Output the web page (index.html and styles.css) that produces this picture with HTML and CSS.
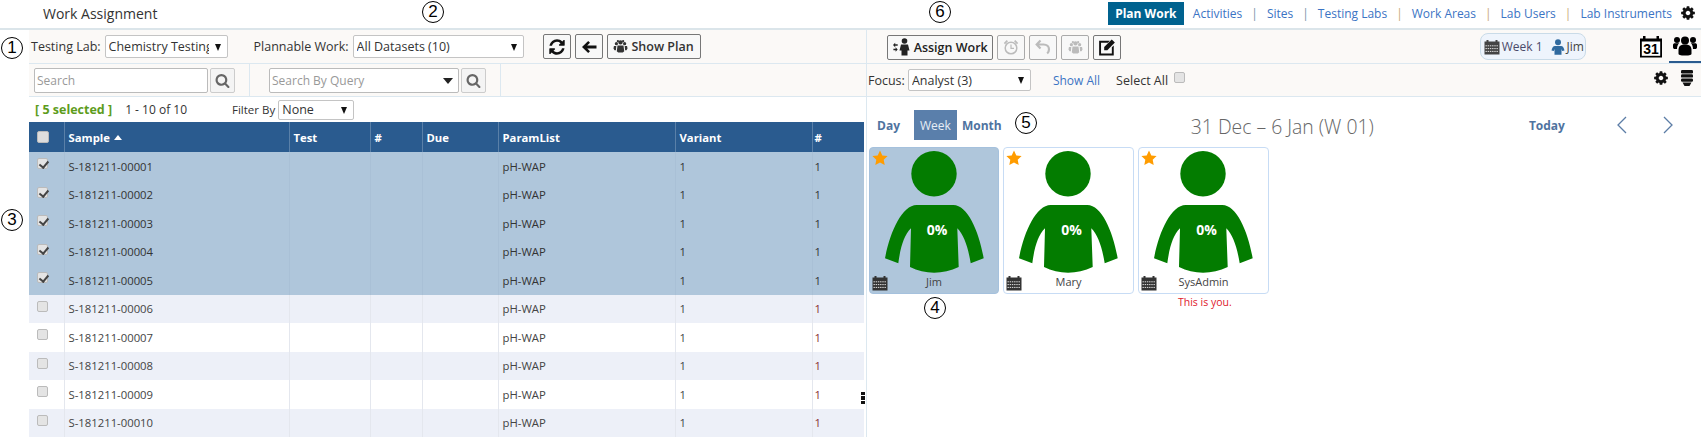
FILE: index.html
```html
<!DOCTYPE html>
<html lang="en">
<head>
<meta charset="utf-8">
<title>Work Assignment</title>
<link rel="stylesheet" href="styles.css">
</head>
<body>
<svg class="defs" aria-hidden="true">
  <symbol id="i-gear" viewBox="0 0 1792 1792"><path d="M1152 896q0-106-75-181t-181-75-181 75-75 181 75 181 181 75 181-75 75-181zm512-109v222q0 12-8 23t-20 13l-185 28q-19 54-39 91 35 50 107 138 10 12 10 25t-9 23q-27 37-99 108t-94 71q-12 0-26-9l-138-108q-44 23-91 38-16 136-29 186-7 28-36 28h-222q-14 0-24.5-8.5t-11.5-21.5l-28-184q-49-16-90-37l-141 107q-10 9-25 9-14 0-25-11-126-114-165-168-7-10-7-23 0-12 8-23 15-21 51-66.5t54-70.5q-27-50-41-99l-183-27q-13-2-21-12.5t-8-23.5v-222q0-12 8-23t19-13l186-28q14-46 39-92-40-57-107-138-10-12-10-24 0-10 9-23 26-36 98.5-107.5t94.5-71.5q13 0 26 10l138 107q44-23 91-38 16-136 29-186 7-28 36-28h222q14 0 24.5 8.5t11.5 21.5l28 184q49 16 90 37l142-107q9-9 24-9 13 0 25 10 129 119 165 170 7 8 7 22 0 12-8 23-15 21-51 66.5t-54 70.5q26 50 41 98l183 28q13 2 21 12.5t8 23.5z"/></symbol>
  <symbol id="i-search" viewBox="0 0 1792 1792"><path d="M1216 832q0-185-131.5-316.5t-316.5-131.5-316.5 131.5-131.5 316.5 131.5 316.5 316.5 131.5 316.5-131.5 131.5-316.5zm512 832q0 52-38 90t-90 38q-54 0-90-38l-343-342q-179 124-399 124-143 0-273.5-55.5t-225-150-150-225-55.5-273.5 55.5-273.5 150-225 225-150 273.5-55.5 273.5 55.5 225 150 150 225 55.5 273.5q0 220-124 399l343 343q37 37 37 90z"/></symbol>
  <symbol id="i-refresh" viewBox="0 0 1792 1792"><path d="M1639 1056q0 5-1 7-64 268-268 434.5t-478 166.5q-146 0-282.5-55t-243.5-157l-129 129q-19 19-45 19t-45-19-19-45v-448q0-26 19-45t45-19h448q26 0 45 19t19 45-19 45l-137 137q71 66 161 102t187 36q134 0 250-65t186-179q11-17 53-117 8-23 30-23h192q13 0 22.5 9.5t9.5 22.5zm25-800v448q0 26-19 45t-45 19h-448q-26 0-45-19t-19-45 19-45l138-138q-148-137-349-137-134 0-250 65t-186 179q-11 17-53 117-8 23-30 23h-199q-13 0-22.5-9.5t-9.5-22.5v-7q65-268 270-434.5t480-166.5q146 0 284 55.5t245 156.5l130-129q19-19 45-19t45 19 19 45z"/></symbol>
  <symbol id="i-back" viewBox="0 0 16 16"><path d="M7.2 2 1 8l6.200 6 1.800-1.700L6.200 9.400H15.500V6.600H6.200L9 3.700z"/></symbol>
  <symbol id="i-team" viewBox="0 0 16 16"><circle cx="8" cy="3.600" r="2.300"/><circle cx="3.600" cy="5" r="1.700"/><circle cx="12.400" cy="5" r="1.700"/><circle cx="5.200" cy="2.300" r="1.200"/><circle cx="10.800" cy="2.300" r="1.200"/><path d="M4.800 7h6.400l.8 6-1.600 1.500H5.600L4 13z"/><path d="M1 7.500h2.500l-.4 4.500H1.600L.5 10zM12.500 7.500H15l.5 2.500-1.100 2h-1.500z"/></symbol>
  <symbol id="i-assign" viewBox="0 0 18 18"><circle cx="11.500" cy="3" r="2.800"/><path d="M8 6.500h7l1.500 6h-2v5H8.500v-5h-2z"/><path d="M0 7 2.200 4.800v1.500h2.500v1.500H2.200v1.500zM4.700 11.500 2.600 13.700v-1.500H.4v-1.500h2.200V9.300z"/></symbol>
  <symbol id="i-clock" viewBox="0 0 16 16"><circle cx="8" cy="9" r="5.800" fill="none" stroke="currentColor" stroke-width="1.500"/><path d="M8 5.500V9.300H11" fill="none" stroke="currentColor" stroke-width="1.200"/><path d="M.8 4 3.700.9 5 2.200 2 5.200zM15.200 4 12.300.9 11 2.200 14 5.200z"/></symbol>
  <symbol id="i-undo" viewBox="0 0 16 16"><path d="M5.500 1.500 1.700 5.500 5.500 9.500M2 5.500h6.500c3.300 0 5.500 2.200 5.500 4.800 0 1.700-.7 3.200-1.800 4.200" fill="none" stroke="currentColor" stroke-width="2.200"/></symbol>
  <symbol id="i-edit" viewBox="0 0 16 16"><path d="M1 2.500h9.500L8.800 4.200H2.700v9.600h9.600V8.300L14 6.600V15.500H1z"/><path d="M5.500 8 12.200 1.300 15 4 8.300 10.800H5.500z"/></symbol>
  <symbol id="i-cal" viewBox="0 0 16 16"><path d="M.5 2.500h2V1h2v1.500h7V1h2v1.500h2v13H.5z"/><path d="M1.500 6.800H14.500M1.500 9.600H14.500M1.500 12.400H14.500" fill="none" stroke="#e2e2e2" stroke-width="1" stroke-dasharray="1.400 .8"/></symbol>
  <symbol id="i-person" viewBox="0 0 14 16"><circle cx="7" cy="3.200" r="3"/><path d="M4 7h6c1.900 0 3 2 3.500 4.500l-2.300.6L10.500 10v5.800h-7V10l-.7 2.100-2.300-.6C1 9 2.100 7 4 7z"/></symbol>
  <symbol id="i-users" viewBox="0 0 24 20"><circle cx="12" cy="4.500" r="4"/><circle cx="4" cy="4" r="3"/><circle cx="20" cy="4" r="3"/><path d="M5.500 14c0-3.800 2.200-5.500 6.500-5.500S18.500 10.200 18.500 14v3.500c0 1.500-1.500 2-6.500 2s-6.500-.5-6.500-2z"/><path d="M0 9c0-1.200.8-1.800 2-1.800h4.200c-1.500 1.300-2.200 3.200-2.200 5.800H2c-1.300 0-2-.6-2-1.800zM24 9c0-1.200-.8-1.800-2-1.800h-4.200c1.500 1.300 2.200 3.200 2.200 5.800h2c1.300 0 2-.6 2-1.800z"/></symbol>
  <symbol id="i-stack" viewBox="0 0 14 16"><rect x="1" y="0" width="12" height="3.400" rx="1.200"/><rect x="1" y="4.200" width="12" height="3.400" rx="1.200"/><rect x="1" y="8.400" width="12" height="3.400" rx="1.200"/><path d="M2.500 12.600h9L9.500 16h-5z"/></symbol>
  <symbol id="i-star" viewBox="0 0 16 16"><path d="m8 .5 2.300 4.900 5.300.7-3.900 3.700 1 5.300L8 12.500l-4.700 2.600 1-5.300L.4 6.100l5.300-.7z"/></symbol>
  <symbol id="i-staff" viewBox="0 0 130 147"><circle cx="65" cy="26.700" r="22.700"/><path d="M47.700 58H84.300C99 58 110 85 114.700 111.300L101.700 116.300C99 100 95 88 88.300 81.300L89.700 120C74 127.500 56 127.500 41 120L42 81.300C35 88 31.500 100 29.300 116.300L16 111.300C21 85 33 58 47.700 58z"/></symbol>
</svg>

<div class="page">
  <header class="topbar">
    <h1 class="title">Work Assignment</h1>
    <nav class="nav">
      <a class="nav-current">Plan Work</a>
      <a class="nav-link nav-first">Activities</a><span class="sep">|</span>
      <a class="nav-link">Sites</a><span class="sep">|</span>
      <a class="nav-link">Testing Labs</a><span class="sep sep-tan">|</span>
      <a class="nav-link">Work Areas</a><span class="sep sep-tan">|</span>
      <a class="nav-link">Lab Users</a><span class="sep sep-tan">|</span>
      <a class="nav-link">Lab Instruments</a>
      <svg class="nav-gear"><use href="#i-gear"/></svg>
    </nav>
  </header>

  <main class="main">
    <section class="left">
      <div class="bar bar-one">
        <label class="lbl">Testing Lab:</label>
        <span class="sel sel-lab"><select><option>Chemistry Testing Lab</option></select></span>
        <label class="lbl lbl-plan">Plannable Work:</label>
        <span class="sel sel-work"><select><option>All Datasets (10)</option></select></span>
        <button class="btn btn-icon btn-refresh"><svg class="ico-refresh"><use href="#i-refresh"/></svg></button>
        <button class="btn btn-icon"><svg class="ico16"><use href="#i-back"/></svg></button>
        <button class="btn btn-text"><svg class="ico15"><use href="#i-team"/></svg>Show Plan</button>
      </div>
      <div class="bar bar-two">
        <input class="txt txt-search" placeholder="Search">
        <button class="sbtn"><svg class="ico15"><use href="#i-search"/></svg></button>
        <span class="vline vline-a"></span>
        <span class="combo"><input class="txt txt-query" placeholder="Search By Query"></span>
        <button class="sbtn"><svg class="ico15"><use href="#i-search"/></svg></button>
        <span class="vline vline-b"></span>
      </div>
      <div class="info">
        <span class="count">[ 5 selected ]</span>
        <span class="range">1 - 10 of 10</span>
        <label class="lbl lbl-filter">Filter By</label>
        <span class="sel sel-filter"><select><option>None</option></select></span>
      </div>
      <table class="grid">
        <colgroup>
          <col class="c-check"><col class="c-sample"><col class="c-test"><col class="c-num"><col class="c-due"><col class="c-param"><col class="c-variant"><col class="c-last">
        </colgroup>
        <thead>
          <tr><th><input type="checkbox" class="cb"></th><th>Sample <span class="sort"></span></th><th>Test</th><th>#</th><th>Due</th><th>ParamList</th><th>Variant</th><th>#</th></tr>
        </thead>
        <tbody>
          <tr class="sel-row"><td class="td-cb"><input type="checkbox" class="cb" checked></td><td>S-181211-00001</td><td></td><td></td><td></td><td>pH-WAP</td><td>1</td><td class="red">1</td></tr>
          <tr class="sel-row"><td class="td-cb"><input type="checkbox" class="cb" checked></td><td>S-181211-00002</td><td></td><td></td><td></td><td>pH-WAP</td><td>1</td><td class="red">1</td></tr>
          <tr class="sel-row"><td class="td-cb"><input type="checkbox" class="cb" checked></td><td>S-181211-00003</td><td></td><td></td><td></td><td>pH-WAP</td><td>1</td><td class="red">1</td></tr>
          <tr class="sel-row"><td class="td-cb"><input type="checkbox" class="cb" checked></td><td>S-181211-00004</td><td></td><td></td><td></td><td>pH-WAP</td><td>1</td><td class="red">1</td></tr>
          <tr class="sel-row"><td class="td-cb"><input type="checkbox" class="cb" checked></td><td>S-181211-00005</td><td></td><td></td><td></td><td>pH-WAP</td><td>1</td><td class="red">1</td></tr>
          <tr class="alt"><td class="td-cb"><input type="checkbox" class="cb"></td><td>S-181211-00006</td><td></td><td></td><td></td><td>pH-WAP</td><td>1</td><td class="red">1</td></tr>
          <tr><td class="td-cb"><input type="checkbox" class="cb"></td><td>S-181211-00007</td><td></td><td></td><td></td><td>pH-WAP</td><td>1</td><td class="red">1</td></tr>
          <tr class="alt"><td class="td-cb"><input type="checkbox" class="cb"></td><td>S-181211-00008</td><td></td><td></td><td></td><td>pH-WAP</td><td>1</td><td class="red">1</td></tr>
          <tr><td class="td-cb"><input type="checkbox" class="cb"></td><td>S-181211-00009</td><td></td><td></td><td></td><td>pH-WAP</td><td>1</td><td class="red">1</td></tr>
          <tr class="alt"><td class="td-cb"><input type="checkbox" class="cb"></td><td>S-181211-00010</td><td></td><td></td><td></td><td>pH-WAP</td><td>1</td><td class="red">1</td></tr>
        </tbody>
      </table>
      <span class="kebab"><i></i><i></i><i></i></span>
    </section>

    <section class="right">
      <div class="bar bar-one bar-right">
        <button class="btn btn-assign"><svg class="ico-assign"><use href="#i-assign"/></svg>Assign Work</button>
        <button class="btn btn-icon btn-off"><svg class="ico16"><use href="#i-clock"/></svg></button>
        <button class="btn btn-icon btn-off"><svg class="ico16"><use href="#i-undo"/></svg></button>
        <button class="btn btn-icon btn-off"><svg class="ico15"><use href="#i-team"/></svg></button>
        <button class="btn btn-icon"><svg class="ico-edit"><use href="#i-edit"/></svg></button>
        <span class="pill">
          <svg class="ico16 dark"><use href="#i-cal"/></svg><span class="pill-week">Week 1</span>
          <svg class="ico-person"><use href="#i-person"/></svg><span>Jim</span>
        </span>
        <span class="tab">
          <svg class="ico-cal31" viewBox="0 0 24 23"><path d="M1 3.500h3V1h2.500v2.500h11V1H20v2.500h3V22.500H1z"/><rect x="2.800" y="6.500" width="18.400" height="14.300" fill="#fff"/><text x="12" y="19" class="cal-num">31</text></svg>
        </span>
        <span class="tab tab-on"><svg class="ico-users"><use href="#i-users"/></svg></span>
      </div>
      <div class="bar bar-two bar-right-two">
        <label class="lbl">Focus:</label>
        <span class="sel sel-focus"><select><option>Analyst (3)</option></select></span>
        <a class="nav-link show-all">Show All</a>
        <label class="lbl lbl-all">Select All</label>
        <input type="checkbox" class="cb cb-all">
        <svg class="tool-gear"><use href="#i-gear"/></svg>
        <svg class="tool-stack"><use href="#i-stack"/></svg>
      </div>
      <div class="cal-head">
        <a class="view view-day">Day</a>
        <a class="view view-on">Week</a>
        <a class="view">Month</a>
        <h2 class="range-title">31 Dec – 6 Jan (W 01)</h2>
        <a class="view today">Today</a>
        <svg class="chev chev-l" viewBox="0 0 12 20"><path d="M10 2 2 10l8 8"/></svg>
        <svg class="chev chev-r" viewBox="0 0 12 20"><path d="m2 2 8 8-8 8"/></svg>
      </div>
      <div class="cards">
        <article class="card card-on">
          <svg class="star"><use href="#i-star"/></svg>
          <svg class="staff"><use href="#i-staff"/></svg>
          <span class="load">0%</span>
          <svg class="card-cal"><use href="#i-cal"/></svg>
          <span class="card-name">Jim</span>
        </article>
        <article class="card">
          <svg class="star"><use href="#i-star"/></svg>
          <svg class="staff"><use href="#i-staff"/></svg>
          <span class="load">0%</span>
          <svg class="card-cal"><use href="#i-cal"/></svg>
          <span class="card-name">Mary</span>
        </article>
        <div class="card-wrap">
          <article class="card">
            <svg class="star"><use href="#i-star"/></svg>
            <svg class="staff"><use href="#i-staff"/></svg>
            <span class="load">0%</span>
            <svg class="card-cal"><use href="#i-cal"/></svg>
            <span class="card-name">SysAdmin</span>
          </article>
          <p class="you">This is you.</p>
        </div>
      </div>
    </section>
  </main>

  <span class="mark mark-1">1</span>
  <span class="mark mark-2">2</span>
  <span class="mark mark-3">3</span>
  <span class="mark mark-4">4</span>
  <span class="mark mark-5">5</span>
  <span class="mark mark-6">6</span>
</div>
</body>
</html>
```

FILE: styles.css
```css
* { box-sizing: border-box; }
html, body { margin: 0; padding: 0; background: #fff; }
body { font-family: "Open Sans", "Liberation Sans", sans-serif; font-size: 12px; color: #333; }
.defs { display: none; }
svg { fill: currentColor; }

.page { position: relative; width: 1701px; height: 437px; overflow: hidden; }

/* top bar */
.topbar { display: flex; align-items: center; height: 30px; padding: 0 5px 2px 43px; border-bottom: 2px solid #dbe5ea; }
.title { margin: 0; font-size: 14px; font-weight: 400; color: #333; }
.nav { display: flex; align-items: center; margin-left: auto; height: 23px; }
.nav-current { display: flex; align-items: center; justify-content: center; width: 76px; height: 23px; background: #00628f; color: #fff; font-weight: 700; }
.nav-link { color: #3b74c4; }
.nav-first { margin-left: 9px; }
.sep { color: #7b93a8; margin: 0 9px; font-size: 12px; }
.sep-tan { color: #c6a878; }
.nav-gear { width: 16px; height: 16px; margin-left: 8px; color: #111; }

/* panels */
.main { display: flex; }
.left { position: relative; width: 838px; margin-left: 29px; border-right: 1px solid #dce8f0; }
.right { flex: 1; min-width: 0; }

.bar { display: flex; align-items: center; background: #fbf9f7; border-bottom: 1px solid #dce8f0; }
.bar-one { height: 34px; padding-left: 2px; }
.bar-two { height: 33px; padding-left: 5px; }
.info { display: flex; align-items: center; height: 25px; padding-left: 6px; }

.lbl { color: #333; font-size: 12.500px; white-space: nowrap; }
.lbl-plan { margin-left: 26px; }
.lbl-filter { margin-left: 45px; font-size: 11.500px; }
.lbl-all { margin-left: 16px; }

.sel { position: relative; display: inline-flex; margin-left: 4px; }
.sel select { appearance: none; width: 100%; height: 100%; padding: 0 18px 0 3px; border: 1px solid #c4c4c4; border-radius: 2px; background: #fff; font: inherit; font-size: 12.500px; color: #333; }
.sel::after { content: ""; position: absolute; right: 7px; top: 50%; margin-top: -3px; border-left: 3.500px solid transparent; border-right: 3.500px solid transparent; border-top: 7px solid #111; }
.sel-lab { width: 123px; height: 23px; }
.sel-work { width: 171px; height: 23px; }
.sel-filter { width: 76px; height: 20px; margin-left: 3px; }
.sel-focus { width: 123px; height: 22px; margin-left: 3px; }

.btn { display: inline-flex; align-items: center; justify-content: center; height: 25px; padding: 0; border: 1px solid #777; border-radius: 2px; background: #f8f8f8; color: #111; font: inherit; }
.btn-icon { width: 28px; margin-left: 4px; }
.btn-refresh { margin-left: 19px; }
.btn-text { width: 94px; margin-left: 4px; gap: 3px; font-size: 12.500px; font-weight: 600; color: #333; }
.btn-assign { width: 107px; gap: 3px; font-size: 12.500px; font-weight: 600; color: #222; }
.btn-off { border-color: #aaa; color: #bbb; }
.ico15 { width: 15px; height: 15px; }
.ico16 { width: 16px; height: 16px; }
.ico-refresh { width: 18px; height: 18px; }
.ico-edit { width: 18px; height: 18px; }
.ico-assign { width: 18px; height: 18px; }

.txt { height: 25px; padding: 0 2px; border: 1px solid #bbb; border-radius: 2px; background: #fff; font: inherit; color: #333; }
.txt::placeholder { color: #999; opacity: 1; }
.txt-search { width: 174px; }
.txt-query { width: 190px; }
.combo { position: relative; display: inline-flex; }
.combo::after { content: ""; position: absolute; right: 6px; top: 10px; border-left: 5px solid transparent; border-right: 5px solid transparent; border-top: 6px solid #222; }
.sbtn { display: inline-flex; align-items: center; justify-content: center; width: 25px; height: 25px; margin-left: 2px; padding: 0; border: 1px solid #ccc; border-radius: 2px; background: #f4f4f4; color: #666; }
.vline { width: 1px; height: 32px; background: #dce8f0; }
.vline-a { margin: 0 19px 0 14px; }
.vline-b { margin-left: 14px; }

.count { color: #5d9c1c; font-size: 12.500px; font-weight: 700; }
.range { margin-left: 13px; }

/* table */
.grid { width: 835px; table-layout: fixed; border-collapse: collapse; }
.c-check { width: 35px; } .c-sample { width: 225px; } .c-test { width: 81px; } .c-num { width: 52px; }
.c-due { width: 76px; } .c-param { width: 177px; } .c-variant { width: 137px; } .c-last { width: 52px; }
.grid th { height: 30px; padding: 0 4px; background: #2a5b8f; border-left: 1px solid #5a80a8; color: #fff; font-size: 11.300px; font-weight: 700; text-align: left; }
.grid th:first-child { border-left: 0; padding-left: 8px; }
.grid th:last-child, .grid td:last-child { padding-left: 2px; }
.grid td { height: 28.500px; padding: 0 4px; border-left: 1px solid #e4e7ee; font-size: 11.300px; color: #444; }
.grid td:first-child { border-left: 0; padding-left: 8px; }
.grid tr.sel-row td { background: #afc6db; border-left-color: #a9c0d6; color: #333; }
.grid tr.alt td { background: #edf0f8; }
.grid td.td-cb { vertical-align: top; padding-top: 6px; }
.grid td.red { color: #8a2f2f; }
.sort { display: inline-block; margin-left: 1px; vertical-align: 2px; border-left: 4.500px solid transparent; border-right: 4.500px solid transparent; border-bottom: 5px solid #fff; }

.cb { appearance: none; position: relative; display: block; width: 11px; height: 11px; margin: 0; border: 1px solid #bbb; border-radius: 2px; background: #e4e4e4; }
.cb:checked::after { content: ""; position: absolute; left: 3px; top: 0; width: 3.500px; height: 7px; border: solid #444; border-width: 0 2px 2px 0; transform: rotate(40deg); }
th .cb { width: 12px; height: 12px; background: #ddd; }

.kebab { position: absolute; right: 1px; top: 362px; display: flex; flex-direction: column; gap: 1px; }
.kebab i { display: block; width: 4px; height: 3.300px; background: #111; }

/* right */
.bar-right { padding-left: 20px; }
.bar-right .btn-assign { margin-top: 1px; }
.bar-right .btn-icon { margin-top: 1px; }
.pill { display: inline-flex; align-items: center; width: 107px; height: 27px; margin-left: 359px; padding-left: 3px; border: 1px solid #c9dbe8; border-radius: 8px; background: #eef4fc; color: #444; }
.pill-week { margin-left: 2px; color: #4a4a6a; }
.ico-person { width: 14px; height: 16px; margin: 0 2px 0 8px; color: #2f6a9f; }
.tab { display: flex; align-items: center; justify-content: center; align-self: stretch; }
.ico-cal31 { width: 24px; height: 23px; margin-left: 53px; color: #000; }
.cal-num { font-family: "Liberation Sans", sans-serif; font-size: 14px; font-weight: 700; text-anchor: middle; fill: #000; }
.tab-on { width: 32px; margin-left: 6px; border-bottom: 2px solid #2a5b8f; }
.ico-users { width: 24px; height: 20px; color: #000; }
.bar-right-two { padding-left: 1px; }
.show-all { margin-left: 22px; }
.cb-all { flex: none; margin: -5px 0 0 6px; }
.tool-gear { flex: none; width: 16px; height: 16px; margin: -4px 0 0 auto; color: #111; }
.tool-stack { flex: none; width: 14px; height: 16px; margin: -4px 7px 0 11px; color: #111; }

.cal-head { display: flex; align-items: center; height: 30px; margin-top: 13px; }
.cal-head > * { flex: none; }
.view { color: #4f73a0; font-weight: 700; }
.view-day { margin-left: 10px; }
.view-on { display: flex; align-items: center; justify-content: center; width: 43px; height: 30px; margin: 0 5px 0 14px; background: #5a7fab; color: #e6edf5; font-weight: 400; }
.range-title { margin: 3px 0 0 189px; font-size: 19.400px; font-weight: 300; color: #666; white-space: nowrap; }
.today { margin-left: 155px; }
.chev { width: 12px; height: 20px; fill: none; stroke: #5c7da6; stroke-width: 1.300; }
.chev-l { margin-left: 51px; }
.chev-r { margin-left: 34px; }

.cards { display: flex; align-items: flex-start; gap: 4px; margin-top: 7px; padding-left: 2px; }
.card { position: relative; width: 131px; height: 147px; border: 1px solid #c7dcf5; border-radius: 4px; background: #fff; }
.card-on { background: #afc6db; border-color: #a5c1dd; width: 130px; }
.star { position: absolute; left: 2px; top: 2px; width: 16px; height: 16px; color: #ff9c00; }
.staff { display: block; width: 130px; height: 147px; margin: -1px 0 0 -1px; color: #037c00; }
.load { position: absolute; left: 6px; right: 0; top: 72px; text-align: center; color: #fff; font-size: 14px; font-weight: 700; }
.card-cal { position: absolute; left: 2px; bottom: 2px; width: 16px; height: 16px; color: #333; }
.card-name { position: absolute; left: 0; right: 0; bottom: 4px; text-align: center; font-size: 11px; color: #444; }
.card-wrap { width: 131px; }
.you { margin: 1px 0 0 40px; color: #e0202c; font-size: 10.500px; }

/* annotation marks */
.mark { position: absolute; display: flex; align-items: center; justify-content: center; width: 22px; height: 22px; border: 1.500px solid #000; border-radius: 50%; background: #fff; color: #000; font-family: "Liberation Sans Narrow", "Liberation Sans", sans-serif; font-size: 17px; }
.mark-1 { left: 1px; top: 37px; }
.mark-2 { left: 422px; top: 1px; }
.mark-3 { left: 1px; top: 209px; }
.mark-4 { left: 924px; top: 297px; }
.mark-5 { left: 1015px; top: 112px; }
.mark-6 { left: 929px; top: 1px; }
```
